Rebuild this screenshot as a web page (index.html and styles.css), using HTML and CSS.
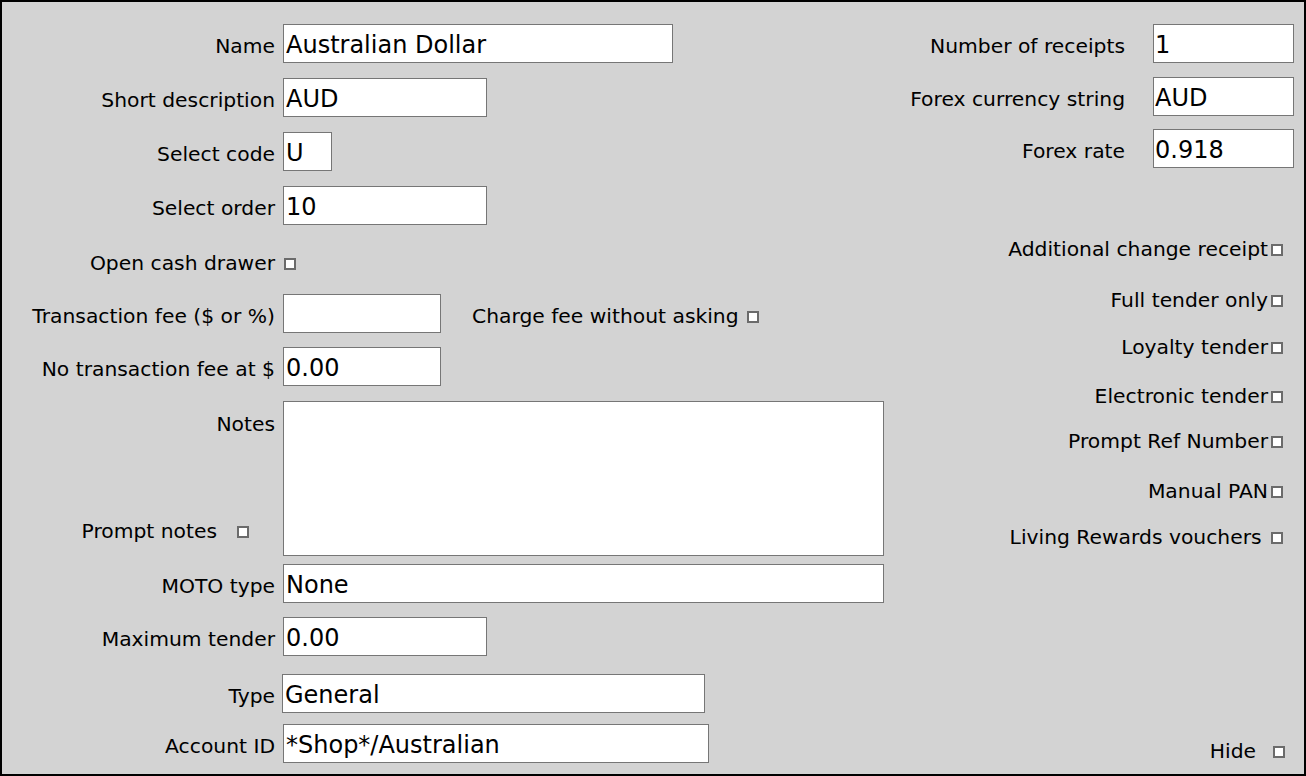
FILE: index.html
```html
<!DOCTYPE html>
<html>
<head>
<meta charset="utf-8">
<link rel="stylesheet" href="styles.css">
</head>
<body>
<div class="frame">
  <div class="left">
    <div class="row">
      <span class="lbl">Name</span>
      <input class="field w-name" value="Australian Dollar">
    </div>
    <div class="row gap15">
      <span class="lbl">Short description</span>
      <input class="field w-mid" value="AUD">
    </div>
    <div class="row gap15">
      <span class="lbl">Select code</span>
      <input class="field w-code" value="U">
    </div>
    <div class="row gap15">
      <span class="lbl">Select order</span>
      <input class="field w-mid" value="10">
    </div>
    <div class="row checkrow gap15">
      <span class="lbl">Open cash drawer</span>
      <span class="cell"><input type="checkbox" class="cb cb-open"></span>
    </div>
    <div class="row gap15">
      <span class="lbl">Transaction fee ($ or %)</span>
      <span class="cell"><input class="field w-fee" value=""><span class="inline-lbl">Charge fee without asking</span><input type="checkbox" class="cb cb-charge"></span>
    </div>
    <div class="row gap14">
      <span class="lbl">No transaction fee at $</span>
      <input class="field w-fee" value="0.00">
    </div>
    <div class="row notes-row gap15">
      <span class="lbl notes-lbl">
        <span>Notes</span>
        <span class="prompt-notes">Prompt notes<input type="checkbox" class="cb cb-prompt"></span>
      </span>
      <textarea class="notes"></textarea>
    </div>
    <div class="row gap8">
      <span class="lbl">MOTO type</span>
      <input class="field w-wide" value="None">
    </div>
    <div class="row gap14">
      <span class="lbl">Maximum tender</span>
      <input class="field w-mid" value="0.00">
    </div>
    <div class="row gap18">
      <span class="lbl">Type</span>
      <input class="field w-type" value="General">
    </div>
    <div class="row gap11">
      <span class="lbl">Account ID</span>
      <input class="field w-acct" value="*Shop*/Australian">
    </div>
  </div>
  <div class="right">
    <div class="rrow">
      <span class="lbl">Number of receipts</span>
      <input class="field w-right" value="1">
    </div>
    <div class="rrow gap14">
      <span class="lbl">Forex currency string</span>
      <input class="field w-right" value="AUD">
    </div>
    <div class="rrow gap13">
      <span class="lbl">Forex rate</span>
      <input class="field w-right" value="0.918">
    </div>
    <div class="crow c1">Additional change receipt<input type="checkbox" class="cb"></div>
    <div class="crow c2">Full tender only<input type="checkbox" class="cb"></div>
    <div class="crow c3">Loyalty tender<input type="checkbox" class="cb"></div>
    <div class="crow c4">Electronic tender<input type="checkbox" class="cb"></div>
    <div class="crow c5">Prompt Ref Number<input type="checkbox" class="cb"></div>
    <div class="crow c6">Manual PAN<input type="checkbox" class="cb"></div>
    <div class="crow c7">Living Rewards vouchers&nbsp;<input type="checkbox" class="cb"></div>
    <div class="crow hide-row">Hide<input type="checkbox" class="cb cb-hide"></div>
  </div>
</div>
</body>
</html>
```

FILE: styles.css
```css
html, body {
  margin: 0;
  padding: 0;
}

body {
  font-family: "DejaVu Sans", Verdana, sans-serif;
  font-size: 20.3px;
  color: #000;
}

.frame {
  box-sizing: border-box;
  width: 1306px;
  height: 776px;
  border: 2px solid #000;
  background: #d3d3d3;
  display: flex;
}

.left {
  width: 890px;
  padding-top: 22px;
  display: flex;
  flex-direction: column;
}

.row {
  display: grid;
  grid-template-columns: 273px 1fr;
  column-gap: 8px;
  align-items: baseline;
  justify-items: start;
}

.lbl {
  white-space: nowrap;
}

.row > .lbl {
  justify-self: end;
  text-align: right;
}

.gap8 { margin-top: 8px; }
.gap11 { margin-top: 11px; }
.gap13 { margin-top: 13px; }
.gap14 { margin-top: 14px; }
.gap15 { margin-top: 15px; }
.gap18 { margin-top: 18px; }

.field {
  box-sizing: border-box;
  height: 39px;
  margin: 0;
  padding: 2px 2px 0 2px;
  border: 1px solid #767676;
  border-radius: 0;
  background: #fff;
  font-family: "DejaVu Sans", Verdana, sans-serif;
  font-size: 24px;
  color: #000;
  outline: none;
}

.w-name { width: 390px; }
.w-mid { width: 204px; }
.w-code { width: 49px; }
.w-fee { width: 158px; }
.w-wide { width: 601px; }
.w-type { width: 423px; margin-left: -1px; }
.w-acct { width: 426px; }
.w-right { width: 141px; margin-left: 28px; padding-left: 1px; }

.cell {
  white-space: nowrap;
}

.checkrow {
  box-sizing: border-box;
  height: 39px;
  padding-top: 11px;
}

.cb {
  -webkit-appearance: none;
  appearance: none;
  box-sizing: border-box;
  width: 12px;
  height: 12px;
  margin: 0 0 0 3px;
  border: 2px solid #6b6b6b;
  background: #fff;
  vertical-align: baseline;
  border-radius: 0;
}

.cb-open { margin-left: 1px; }

.inline-lbl {
  margin-left: 31px;
}

.cb-charge { margin-left: 8px; }

.notes-row {
  align-items: stretch;
}

.notes-lbl {
  display: flex;
  flex-direction: column;
  justify-content: space-between;
  align-items: flex-end;
  padding-top: 11px;
  padding-bottom: 13px;
}

.prompt-notes {
  margin-right: 26px;
}

.cb-prompt { margin-left: 20px; }

.notes {
  box-sizing: border-box;
  width: 601px;
  height: 155px;
  margin: 0;
  padding: 2px;
  border: 1px solid #767676;
  border-radius: 0;
  background: #fff;
  resize: none;
  font-family: "DejaVu Sans", Verdana, sans-serif;
  font-size: 24px;
}

.right {
  flex: 1;
  padding-top: 22px;
  padding-right: 10px;
  padding-bottom: 11px;
  display: flex;
  flex-direction: column;
}

.rrow {
  display: flex;
  justify-content: flex-end;
  align-items: baseline;
}

.crow {
  text-align: right;
  white-space: nowrap;
  line-height: 24px;
  margin-right: 11px;
}

.c1 { margin-top: 69px; }
.c2 { margin-top: 27px; }
.c3 { margin-top: 23px; }
.c4 { margin-top: 25px; }
.c5 { margin-top: 21px; }
.c6 { margin-top: 26px; }
.c7 { margin-top: 22px; }

.hide-row {
  margin-top: auto;
  margin-right: 9px;
}

.cb-hide { margin-left: 17px; }
```
